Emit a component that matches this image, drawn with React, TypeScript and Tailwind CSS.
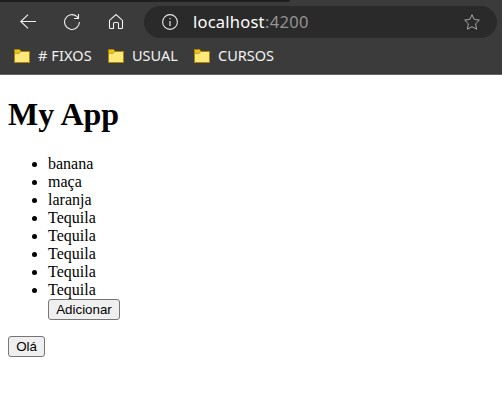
import type { ReactNode } from "react";

const items = ["banana", "maça", "laranja", "Tequila", "Tequila", "Tequila", "Tequila", "Tequila"];

function Folder() {
  return (
    <svg width="16" height="14" viewBox="0 0 16 14" className="shrink-0">
      <path d="M.5 13.5V.5H5.5L7 2.5H15.5V13.5Z" fill="#fde87a" stroke="#a98407" />
      <path d="M1 1H5.4L6.4 2.3L5.2 3.6H1Z" fill="#f3c40b" />
      <path d="M1 4.2H5.2L7 2.2" fill="none" stroke="#a98407" strokeWidth=".9" />
    </svg>
  );
}

function Bookmark({ label, className }: { label: string; className: string }) {
  return (
    <div className="flex h-5 items-center gap-2">
      <Folder />
      <span className={`whitespace-nowrap pb-0.5 leading-5 text-[#f2f2f2] ${className}`}>{label}</span>
    </div>
  );
}

function PageButton({ children, className }: { children: ReactNode; className: string }) {
  return (
    <button
      className={`block h-[21px] rounded-[3px] border border-[#767676] bg-[#efefef] text-center font-['Liberation_Sans',sans-serif] text-[13.333px] leading-[19px] text-black ${className}`}
    >
      {children}
    </button>
  );
}

export default function App() {
  return (
    <div className="h-[408px] w-[502px] overflow-hidden bg-white">
      <header className="h-[75px] border-b border-[#646464] bg-[#3b3b3b] font-['Noto_Sans',sans-serif]">
        <div className="h-0.5 w-[290px] rounded-br-sm bg-[#1f1f1f]" />
        <div className="mt-1 flex h-8 items-center pl-5 pr-[5px]">
          <svg width="16" height="16" viewBox="0 0 16 16" fill="none" stroke="#f0f0f0" strokeWidth="1.1">
            <path d="M16 7.5H.8M8 .7L.8 7.5L8 14.3" />
          </svg>
          <svg className="ml-7" width="16" height="16" viewBox="0 0 16 16" fill="none" stroke="#f0f0f0" strokeWidth="1.1">
            <path d="M15.4 8A7.4 7.4 0 1 1 12.7 2.3L14.5 4.5M14.5 0V4.5H10" />
          </svg>
          <svg className="ml-7" width="16" height="16" viewBox="0 0 16 16" fill="none" stroke="#f0f0f0" strokeWidth="1.1">
            <path d="M1.5 6.4L8 .5L14.5 6.4V13.5Q14.5 14.5 13.5 14.5H10.5V9.5Q10.5 8.5 9.5 8.5H6.5Q5.5 8.5 5.5 9.5V14.5H2.5Q1.5 14.5 1.5 13.5Z" />
          </svg>
          <div className="ml-5 flex h-8 flex-1 items-center rounded-full bg-[#2a2a2a] pl-[18px] pr-[17px]">
            <svg width="16" height="16" viewBox="0 0 16 16" fill="none" stroke="#e8e8e8">
              <circle cx="8" cy="8" r="7.4" strokeWidth="1.1" />
              <path d="M8 7V12M8 4V5.3" strokeWidth="1.2" />
            </svg>
            <span className="ml-[15px] flex text-[16.5px] leading-6">
              <span className="w-[72px] whitespace-nowrap tracking-[0.23px] text-white">localhost</span>
              <span className="whitespace-nowrap tracking-[0.3px] text-[#949494]">:4200</span>
            </span>
            <svg className="ml-auto" width="16" height="16" viewBox="0 0 16 16" fill="none" stroke="#a6a6a6" strokeLinejoin="round">
              <path d="M8 .7L10.2 5.4L15.4 6.1L11.6 9.7L12.6 15.2L8 12.7L3.4 15.2L4.4 9.7L.6 6.1L5.8 5.4Z" />
            </svg>
          </div>
        </div>
        <div className="mt-2 flex gap-4 pl-3.5">
          <Bookmark label="# FIXOS" className="w-[54px] text-[14.5px] tracking-[0.1px]" />
          <Bookmark label="USUAL" className="w-[46px] text-[14.5px]" />
          <Bookmark label="CURSOS" className="w-14 text-[14.5px]" />
        </div>
      </header>
      <main className="px-2 pt-[21px] font-['Liberation_Serif',serif] text-base leading-[18px] text-black">
        <h1 className="text-[32px] font-bold leading-[37px]">My App</h1>
        <ul className="mt-[22px] list-disc pl-10">
          {items.map((item, i) => (
            <li key={i}>{item}</li>
          ))}
          <PageButton className="w-[72px]">Adicionar</PageButton>
        </ul>
        <PageButton className="mt-4 w-[37px]">Olá</PageButton>
      </main>
    </div>
  );
}
